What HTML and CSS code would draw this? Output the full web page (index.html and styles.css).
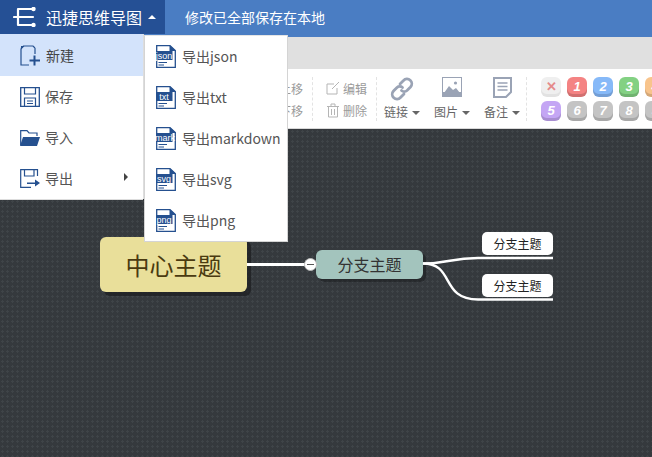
FILE: index.html
```html
<!DOCTYPE html>
<html lang="zh">
<head>
<meta charset="utf-8">
<title>迅捷思维导图</title>
<link rel="stylesheet" href="styles.css">
</head>
<body>
<svg class="defs" width="0" height="0" aria-hidden="true">
  <symbol id="file" viewBox="0 0 20 23">
    <path d="M.7.7H14L19.3 5.6V22.3H.7Z" fill="#fff" stroke="#25508f" stroke-width="1.3"/>
    <path d="M13.5 0 20 6H13.5Z" fill="#25508f"/>
    <rect x="0" y="6" width="16.500" height="9" fill="#25508f"/>
    <path d="M2.5 17.5H11M2.5 20H8" stroke="#25508f" stroke-width="1" fill="none"/>
  </symbol>
</svg>

<header class="topbar">
  <div class="brand">
    <svg class="logo" width="23" height="20" viewBox="0 0 23 20">
      <path d="M5 2H21M1 10H20M5 18H21M5 2V18" fill="none" stroke="#fff" stroke-width="2.200" stroke-linecap="round"/>
      <circle cx="20.500" cy="2" r="2.200" fill="#fff"/><circle cx="20.500" cy="18" r="2.200" fill="#fff"/>
    </svg>
    <span class="brand-name">迅捷思维导图</span>
    <span class="caret-up"></span>
  </div>
  <div class="status">修改已全部保存在本地</div>
</header>

<div class="tabbar"></div>

<div class="toolbar">
  <div class="tgroup tgroup-move">
    <div class="tline">上移</div>
    <div class="tline">下移</div>
  </div>
  <div class="tgroup tgroup-edit">
    <div class="tline">
      <svg width="14" height="14" viewBox="0 0 14 14"><path d="M11 7V13H1V3H8M6 8 13 1" fill="none" stroke="#b5b5b5" stroke-width="1"/></svg>
      <span>编辑</span>
    </div>
    <div class="tline">
      <svg width="14" height="15" viewBox="0 0 14 15"><path d="M1 3.500H13M5 3.500V1H9V3.500M2.500 3.500V14H11.500V3.500M5.500 6V12M8.500 6V12" fill="none" stroke="#b5b5b5" stroke-width="1"/></svg>
      <span>删除</span>
    </div>
  </div>
  <div class="tgroup tgroup-big">
    <div class="big">
      <svg width="24" height="24" viewBox="0 0 24 24"><g fill="none" stroke="#9aa3b5" stroke-width="2.800" stroke-linecap="round"><path d="M10 7 13.500 3.500A4 4 0 0 1 20.500 10L17 13.500A4 4 0 0 1 11.500 13.500"/><path d="M14 17 10.500 20.500A4 4 0 0 1 3.500 14L7 10.500A4 4 0 0 1 12.500 10.500"/></g></svg>
      <span class="big-label">链接<i class="caret"></i></span>
    </div>
    <div class="big">
      <svg width="20" height="20" viewBox="0 0 20 20"><rect x=".5" y=".5" width="19" height="19" fill="#fff" stroke="#9aa3b5"/><rect x="0" y="15" width="20" height="5" fill="#9aa3b5"/><path d="M2 16 7 9 11 13 14 11 18 16Z" fill="#9aa3b5"/><circle cx="13.500" cy="6" r="1.600" fill="#9aa3b5"/></svg>
      <span class="big-label">图片<i class="caret"></i></span>
    </div>
    <div class="big">
      <svg width="19" height="21" viewBox="0 0 19 21"><path d="M1 1H18V15L13 20H1Z" fill="#fff" stroke="#9aa3b5" stroke-width="2"/><path d="M4.500 6H14.500M4.500 9.500H14.500M4.500 13H14.500" stroke="#9aa3b5" stroke-width="1.500"/></svg>
      <span class="big-label">备注<i class="caret"></i></span>
    </div>
  </div>
  <div class="priorities">
    <span class="pri pri-x">✕</span>
    <span class="pri pri-1">1</span>
    <span class="pri pri-2">2</span>
    <span class="pri pri-3">3</span>
    <span class="pri pri-4">4</span>
    <span class="pri pri-5">5</span>
    <span class="pri pri-g">6</span>
    <span class="pri pri-g">7</span>
    <span class="pri pri-g">8</span>
    <span class="pri pri-g">9</span>
  </div>
</div>

<main class="canvas">
  <div class="node node-root">中心主题</div>
  <div class="node node-main">分支主题</div>
  <div class="node node-sub node-sub-a">分支主题</div>
  <div class="node node-sub node-sub-b">分支主题</div>
  <svg class="links" width="652" height="328" viewBox="0 0 652 328">
    <path d="M247 135.500H305" stroke="#fff" stroke-width="3" fill="none"/>
    <path d="M423 134.500C450 134.500 450 129 478 129H553" stroke="#fff" stroke-width="2.400" fill="none"/>
    <path d="M423 134.500C455 134.500 440 170.500 478 170.500H553" stroke="#fff" stroke-width="2.400" fill="none"/>
  </svg>
  <div class="toggle"></div>
</main>

<nav class="menu">
  <div class="menu-item menu-item-active">
    <svg width="21" height="21" viewBox="0 0 21 21"><path d="M1 3.500 3.500 1H13L15 3M15 3V9M1 3.500V20H9" fill="none" stroke="#25508f" stroke-width="1.200"/><path d="M1 4.500 4.500 1H1Z" fill="#25508f"/><path d="M14.500 10.500V20.500M9.500 15.500H20" stroke="#25508f" stroke-width="2"/></svg>
    <span>新建</span>
  </div>
  <div class="menu-item">
    <svg width="20" height="20" viewBox="0 0 20 20"><path d="M.7.7H19.300V19.300H.7Z" fill="none" stroke="#25508f" stroke-width="1.300"/><path d="M4.500 1V7H15.500V1M4.500 19V11H15.500V19M7 14H13M7 16.500H13" fill="none" stroke="#25508f" stroke-width="1.200"/></svg>
    <span>保存</span>
  </div>
  <div class="menu-item">
    <svg width="20" height="16" viewBox="0 0 20 16"><path d="M.7 15V.7H7L9 3H17V6" fill="none" stroke="#25508f" stroke-width="1.200"/><path d="M0 16 3 7H20L17 16Z" fill="#25508f"/></svg>
    <span>导入</span>
  </div>
  <div class="menu-item">
    <svg width="20" height="19" viewBox="0 0 20 19"><path d="M17.500 7V.7H.7V18.300H11M4.500 1V7H14V1" fill="none" stroke="#25508f" stroke-width="1.200"/><path d="M7 13.500H15V10.500L20 14 15 17.500V15H7Z" fill="#25508f"/></svg>
    <span>导出</span>
    <i class="caret-right"></i>
  </div>
</nav>

<nav class="submenu">
  <div class="sub-item"><svg class="file" width="20" height="23"><use href="#file"/><text x="8" y="13.500" text-anchor="middle" class="file-label">json</text></svg><span>导出json</span></div>
  <div class="sub-item"><svg class="file" width="20" height="23"><use href="#file"/><text x="8" y="13.500" text-anchor="middle" class="file-label">txt</text></svg><span>导出txt</span></div>
  <div class="sub-item"><svg class="file" width="20" height="23"><use href="#file"/><text x="9" y="13.500" text-anchor="middle" class="file-label">mark</text></svg><span>导出markdown</span></div>
  <div class="sub-item"><svg class="file" width="20" height="23"><use href="#file"/><text x="8" y="13.500" text-anchor="middle" class="file-label">svg</text></svg><span>导出svg</span></div>
  <div class="sub-item"><svg class="file" width="20" height="23"><use href="#file"/><text x="8" y="13.500" text-anchor="middle" class="file-label">png</text></svg><span>导出png</span></div>
</nav>
</body>
</html>
```

FILE: styles.css
```css
* { box-sizing: border-box; }
html, body { margin: 0; height: 100%; }
body {
  width: 652px;
  height: 457px;
  overflow: hidden;
  position: relative;
  display: flex;
  flex-direction: column;
  font-family: "Noto Sans CJK SC", "Liberation Sans", sans-serif;
  background: #363b3f;
}
.defs { position: absolute; }

/* top bar */
.topbar {
  flex: 0 0 37px;
  display: flex;
  background: #4a7dc3;
  color: #fff;
}
.brand {
  width: 165px;
  height: 34px;
  padding-left: 13px;
  display: flex;
  align-items: center;
  background: #255095;
}
.brand-name { margin-left: 10px; font-size: 16px; line-height: 34px; }
.caret-up {
  margin-left: 6px;
  width: 0; height: 0;
  border: 4px solid transparent;
  border-top: 0;
  border-bottom-color: #fff;
}
.status { margin-left: 20px; height: 34px; font-size: 14px; line-height: 34px; }

.tabbar { flex: 0 0 32px; background: #e0e0e0; }

/* toolbar */
.toolbar {
  flex: 0 0 60px;
  min-height: 0;
  display: flex;
  background: #fff;
  border-bottom: 1px solid #d9d9d9;
  color: #9a9a9a;
  font-size: 12px;
}
.tgroup {
  flex: none;
  height: 44px;
  margin-top: 8px;
  border-right: 1px dashed #e3e3e3;
}
.tgroup-move { width: 313px; padding-right: 9px; }
.tgroup-edit { width: 64px; padding-left: 13px; }
.tline { height: 22px; display: flex; align-items: center; gap: 3px; }
.tgroup-move .tline { justify-content: flex-end; }
.tgroup-big {
  width: 150px;
  padding-left: 7px;
  display: flex;
  gap: 14px;
}
.big {
  flex: none;
  width: 36px;
  height: 43px;
  display: flex;
  flex-direction: column;
  align-items: center;
  justify-content: space-between;
}
.big-label { color: #666; line-height: 16px; white-space: nowrap; }
.caret {
  display: inline-block;
  margin-left: 4px;
  vertical-align: 2px;
  width: 0; height: 0;
  border: 4px solid transparent;
  border-bottom: 0;
  border-top-color: #666;
}
.priorities {
  flex: none;
  width: 126px;
  margin: 8px 0 0 14px;
  display: grid;
  grid-template-columns: repeat(5, 20px);
  grid-auto-rows: 20px;
  gap: 4px 6px;
}
.pri {
  height: 20px;
  border-radius: 6px;
  color: #fff;
  font: italic bold 13px/19px "Liberation Sans", sans-serif;
  text-align: center;
  box-shadow: inset 0 -3px 0 rgba(0,0,0,.14);
}
.pri-x { background: #efefef; color: #e58a8a; font-style: normal; box-shadow: inset 0 -3px 0 rgba(0,0,0,.05); }
.pri-1 { background: #f48383; }
.pri-2 { background: #86b9f8; }
.pri-3 { background: #83d183; }
.pri-4 { background: #f8c48c; }
.pri-5 { background: #c4a6f4; }
.pri-g { background: #c4c4c4; }

/* canvas */
.canvas {
  position: relative;
  flex: 1;
  min-height: 0;
  background-color: #35393d;
  background-image: radial-gradient(circle, #3f4448 1px, transparent 1.300px);
  background-size: 5px 5px;
}
.links { position: absolute; left: 0; top: 0; }
.node { position: absolute; text-align: center; }
.node-root {
  left: 100px; top: 108px;
  width: 147px; height: 55px;
  border-radius: 6px;
  background: #e9df9a;
  color: #4a3a10;
  font-size: 24px;
  line-height: 55px;
  box-shadow: 4px 4px 0 rgba(20,22,24,.55);
}
.toggle {
  position: absolute;
  left: 304px; top: 129px;
  width: 13px; height: 13px;
  border-radius: 50%;
  background: #fff;
  border: 1px solid #bbb;
}
.toggle::after {
  content: "";
  position: absolute;
  left: 2px; top: 5px;
  width: 7px; height: 1px;
  background: #555;
}
.node-main {
  left: 316px; top: 121px;
  width: 107px; height: 29px;
  border-radius: 6px;
  background: #a3c4bd;
  color: #333;
  font-size: 16px;
  line-height: 29px;
  box-shadow: 3px 3px 0 rgba(20,22,24,.45);
}
.node-sub {
  left: 482px;
  width: 71px; height: 23px;
  border-radius: 5px;
  background: #fff;
  color: #222;
  font-size: 12px;
  line-height: 23px;
}
.node-sub-a { top: 103px; }
.node-sub-b { top: 145px; }

/* left menu */
.menu {
  position: absolute;
  left: 0; top: 34px;
  width: 143px; height: 165px;
  background: #fff;
  box-shadow: 0 1px 0 #ddd, 1px 0 0 #ddd;
  font-size: 14px;
  color: #555;
}
.menu-item {
  position: relative;
  height: 41px;
  padding-left: 20px;
  display: flex;
  align-items: center;
  gap: 5px;
}
.menu-item span { margin-top: -1px; }
.menu-item-active { height: 42px; background: #d3e3fb; color: #444; }
.caret-right {
  position: absolute;
  left: 124px; top: 15px;
  width: 0; height: 0;
  border: 4px solid transparent;
  border-right: 0;
  border-left-color: #444;
}

/* export submenu */
.submenu {
  position: absolute;
  left: 144px; top: 35px;
  width: 144px; height: 207px;
  background: #fff;
  border: 1px solid #d4d4d4;
  border-top: 1px solid #e5e5e5;
  font-size: 14px;
  color: #555;
}
.sub-item {
  height: 41px;
  padding-left: 11px;
  display: flex;
  align-items: center;
  gap: 6px;
}
.sub-item span { margin-top: -1px; }
.file-label { font: 9px "Liberation Sans", sans-serif; fill: #fff; }
```
